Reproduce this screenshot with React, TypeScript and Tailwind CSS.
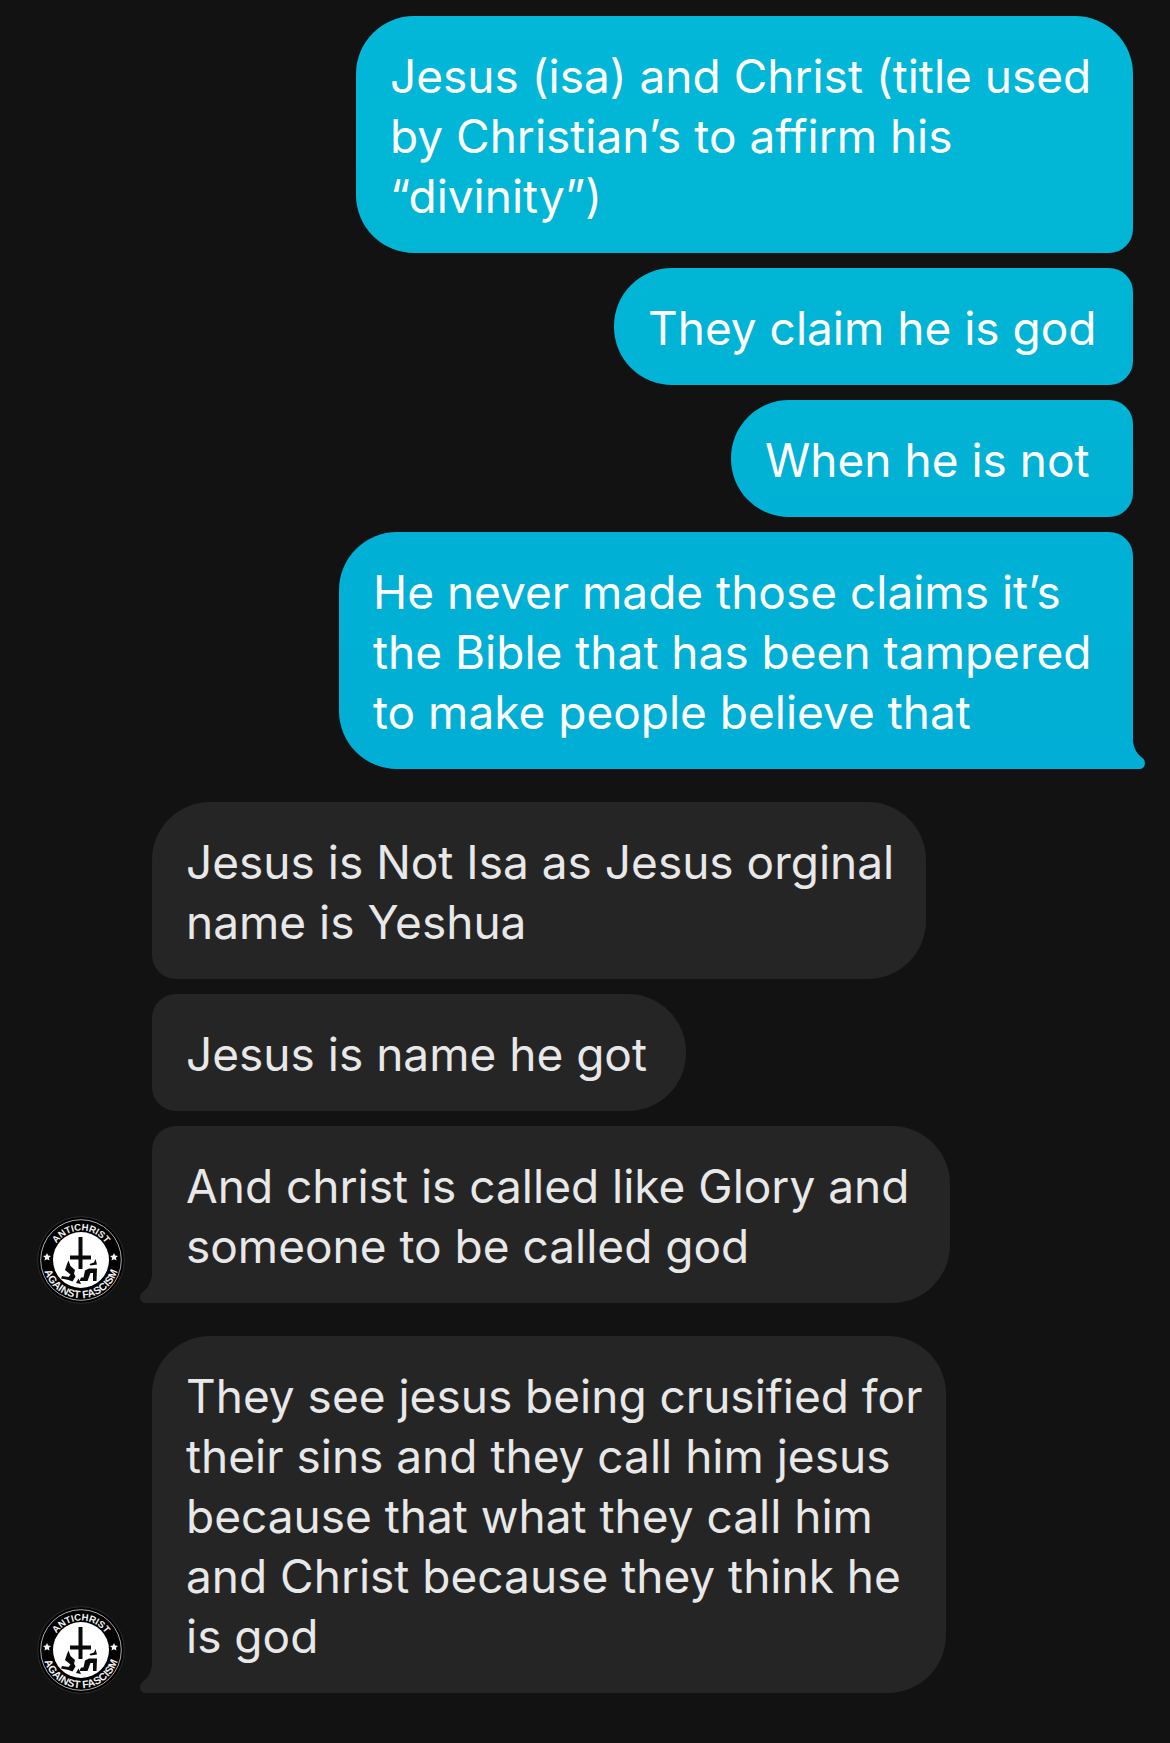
import React from 'react';
import clsx from 'clsx';

type Message = {
  lines: string[];
  className: string;
  tail?: boolean;
};

type Group = {
  from: 'me' | 'them';
  messages: Message[];
};

const groups: Group[] = [
  {
    from: 'me',
    messages: [
      {
        lines: ['Jesus (isa) and Christ (title used', 'by Christian’s to affirm his', '“divinity”)'],
        className: 'w-[777px] rounded-[58px] rounded-br-3xl from-[#02b7d7] to-[#01b5d5]',
      },
      {
        lines: ['They claim he is god'],
        className: 'w-[519px] rounded-l-[58px] rounded-r-3xl from-[#01b5d5] to-[#01b3d5]',
      },
      {
        lines: ['When he is not'],
        className: 'w-[402px] rounded-l-[58px] rounded-r-3xl from-[#01b3d5] to-[#01b1d5]',
      },
      {
        lines: ['He never made those claims it’s', 'the Bible that has been tampered', 'to make people believe that'],
        className: 'w-[794px] rounded-l-[58px] rounded-tr-3xl from-[#01b1d5] to-[#01aed5]',
        tail: true,
      },
    ],
  },
  {
    from: 'them',
    messages: [
      {
        lines: ['Jesus is Not Isa as Jesus orginal', 'name is Yeshua'],
        className: 'w-[774px] rounded-[58px] rounded-bl-3xl',
      },
      {
        lines: ['Jesus is name he got'],
        className: 'w-[534px] rounded-r-[58px] rounded-l-3xl',
      },
      {
        lines: ['And christ is called like Glory and', 'someone to be called god'],
        className: 'w-[798px] rounded-r-[58px] rounded-tl-3xl',
        tail: true,
      },
    ],
  },
  {
    from: 'them',
    messages: [
      {
        lines: [
          'They see jesus being crusified for',
          'their sins and they call him jesus',
          'because that what they call him',
          'and Christ because they think he',
          'is god',
        ],
        className: 'w-[794px] rounded-[58px] rounded-bl-none',
        tail: true,
      },
    ],
  },
];

const Tail: React.FC<{ mine: boolean }> = ({ mine }) => (
  <svg
    viewBox="0 0 13 28"
    aria-hidden="true"
    className={clsx(
      'absolute bottom-0 h-[28px] w-[13px]',
      mine ? 'left-full text-[#01aed5]' : 'right-full -scale-x-100 text-[#252525]'
    )}
  >
    <path d="M0 0C1 8 4 13 9.500 17C13.500 20 12.500 28 6.500 28H0Z" fill="currentColor" />
  </svg>
);

const Avatar: React.FC<{ id: string }> = ({ id }) => (
  <svg
    viewBox="0 0 86 86"
    role="img"
    aria-label="Antichrist against fascism"
    className="w-[86px] shrink-0 overflow-visible"
  >
    <defs>
      <path id={`${id}-top`} d="M13.500 43a29.500 29.500 0 0 1 59 0" />
      <path id={`${id}-bottom`} d="M5 38a38.300 38.300 0 1 0 76 0" />
    </defs>
    <circle cx="43" cy="43" r="43.300" fill="#000" stroke="#2c2c2e" />
    <circle cx="43" cy="43" r="40.300" fill="none" stroke="#d8d8d8" strokeWidth=".8" />
    <circle cx="43" cy="43" r="28" fill="#fff" />
    <g fill="#f4f4f4" fontFamily="'Liberation Sans', Arial, sans-serif" fontWeight="700" textAnchor="middle">
      <text fontSize="9.500">
        <textPath href={`#${id}-top`} startOffset="50%">ANTICHRIST</textPath>
      </text>
      <text fontSize="10.500">
        <textPath href={`#${id}-bottom`} startOffset="50%">AGAINST FASCISM</textPath>
      </text>
      <path d="m9 36 1.200 2.600 2.800.3-2.100 1.900.6 2.800-2.500-1.400-2.500 1.400.6-2.800L5 38.900l2.800-.3zM76 36l1.200 2.600 2.800.3-2.100 1.900.6 2.800-2.500-1.400-2.500 1.400.6-2.800-2.100-1.900 2.800-.3z" />
    </g>
    <g fill="#0a0a0a">
      <path d="M40.500 20h4v18.500H53v4h-8.500V52h-4v-9.500H32v-4h8.500z" />
      <path d="M30.500 43.500l2 5.500 4.500 4-1 3.500 1.500 3-3 5-4-1.500-7.500-1.500 1-2.500 6.500 1 2-2.500-5.500-4.500 2-6z" />
      <path d="M59 51.500h-8l-4 2-1.500 7H43l-1.500 3.500h8l3-8h2.500v8h3.500z" />
      <path d="M51.500 47l4.500-1.500 1.500-3.500 1.500 5.500-6.500 1zM40.500 61.500l-2.500 4.500 5 1z" />
    </g>
  </svg>
);

const Bubble: React.FC<{ message: Message; mine: boolean }> = ({ message, mine }) => (
  <p
    className={clsx(
      'relative whitespace-nowrap pt-[30px] pb-[27px] pl-[34px] text-[46px] leading-[60px]',
      mine ? 'bg-linear-to-b text-white' : 'bg-[#252525] text-[#e8e8e8]',
      message.className
    )}
  >
    {message.lines.map((line) => (
      <span key={line} className="block">
        {line}
      </span>
    ))}
    {message.tail && <Tail mine={mine} />}
  </p>
);

export default function App() {
  return (
    <main className="flex min-h-screen flex-col gap-[33px] bg-[#121212] pt-4 pr-[37px] pb-[50px] pl-[38px] font-['Inter',sans-serif]">
      {groups.map((group, i) => {
        const mine = group.from === 'me';
        return (
          <section key={i} className="flex items-end gap-7">
            {!mine && <Avatar id={`avatar-${i}`} />}
            <div className={clsx('flex flex-1 flex-col gap-[15px]', mine ? 'items-end' : 'items-start')}>
              {group.messages.map((message) => (
                <Bubble key={message.lines[0]} message={message} mine={mine} />
              ))}
            </div>
          </section>
        );
      })}
    </main>
  );
}
